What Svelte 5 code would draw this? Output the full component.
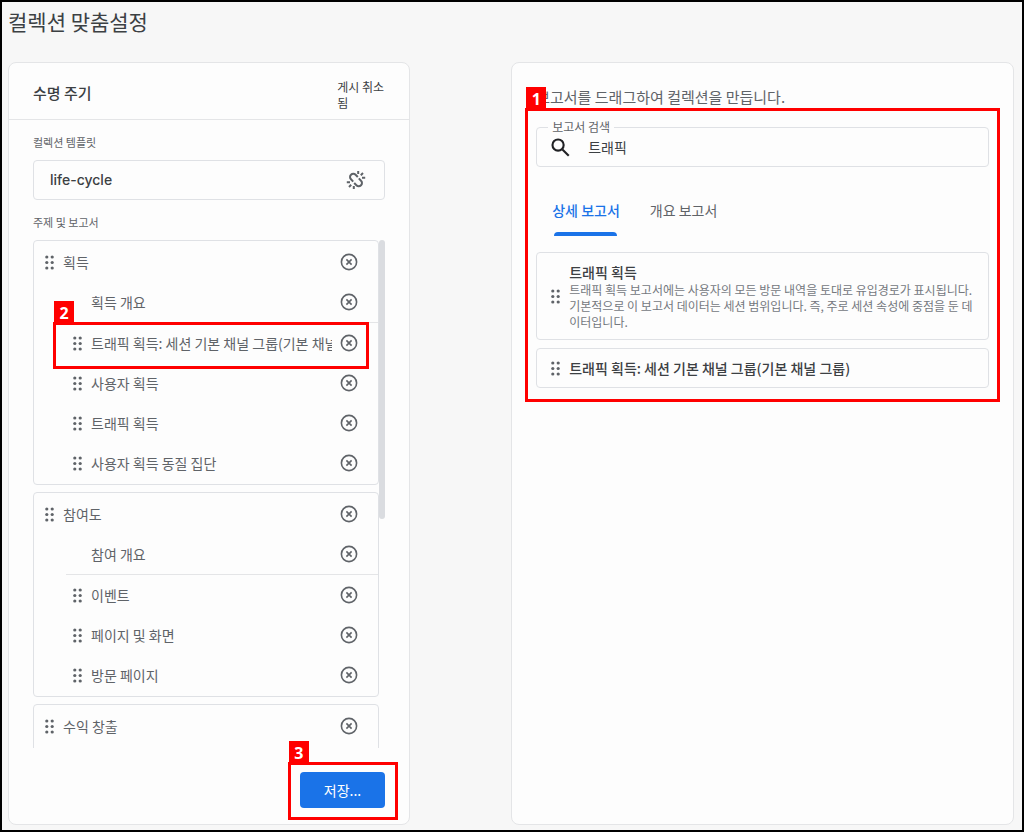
<script>
  let template = $state('life-cycle')
  let query    = $state('트래픽')
  let tab      = $state('detail')

  const TABS = [
    { value: 'detail',   label: '상세 보고서' },
    { value: 'overview', label: '개요 보고서' },
  ]

  let groups = $state([
    {
      name: '획득',
      overview: '획득 개요',
      reports: [
        { name: '트래픽 획득: 세션 기본 채널 그룹(기본 채널', step: 2 },
        { name: '사용자 획득' },
        { name: '트래픽 획득' },
        { name: '사용자 획득 동질 집단' },
      ],
    },
    {
      name: '참여도',
      overview: '참여 개요',
      reports: [
        { name: '이벤트' },
        { name: '페이지 및 화면' },
        { name: '방문 페이지' },
      ],
    },
    { name: '수익 창출', reports: [] },
  ])

  const RESULTS = [
    {
      name: '트래픽 획득',
      desc: '트래픽 획득 보고서에는 사용자의 모든 방문 내역을 토대로 유입경로가 표시됩니다. 기본적으로 이 보고서 데이터는 세션 범위입니다. 즉, 주로 세션 속성에 중점을 둔 데이터입니다.',
    },
    { name: '트래픽 획득: 세션 기본 채널 그룹(기본 채널 그룹)' },
  ]

  function removeReport(group, i) {
    group.reports.splice(i, 1)
  }
</script>

{#snippet handle()}
  <svg class="handle" viewBox="0 0 9 15" aria-hidden="true">
    {#each [2, 7.5, 13] as y}
      <circle cx="1.8" cy={y} r="1.6" />
      <circle cx="7.2" cy={y} r="1.6" />
    {/each}
  </svg>
{/snippet}

{#snippet removeButton(name, onclick)}
  <button type="button" class="remove" aria-label={name} {onclick}>
    <svg viewBox="0 0 18 18" aria-hidden="true">
      <circle cx="9" cy="9" r="7.6" />
      <path d="M6.4 6.4l5.2 5.2M11.6 6.4l-5.2 5.2" />
    </svg>
  </button>
{/snippet}

{#snippet marker(n)}
  <div class="marker marker-{n}"><span>{n}</span></div>
{/snippet}

<div class="page">
  <h1>컬렉션 맞춤설정</h1>

  <main>
    <section class="card">
      <header>
        <h2>수명 주기</h2>
        <p class="status">게시 취소됨</p>
      </header>

      <div class="body">
        <label class="lbl" for="template">컬렉션 템플릿</label>
        <div class="template">
          <input id="template" type="text" bind:value={template} readonly />
          <button type="button" class="unlink" aria-label="연결 해제">
            <svg viewBox="0 0 20 20" aria-hidden="true">
              <path d="M7.2 11.6L5 9.3a3.2 3.2 0 0 1 0-4.6a3.2 3.2 0 0 1 4.6 0l2.2 2.3" />
              <path d="M12.8 8.4l2.2 2.3a3.2 3.2 0 0 1 0 4.6a3.2 3.2 0 0 1-4.6 0L8.2 13" />
              <path d="M12.2 4V1M14.8 5.2l2.2-2.2M16 7.8h3.2M7.8 16v3M5.2 14.8L3 17M4 12.2H.8" />
            </svg>
          </button>
        </div>

        <p class="lbl">주제 및 보고서</p>
        <div class="scroller">
          <div class="groups">
            {#each groups as group}
              <ul class="group">
                <li class="row">
                  {@render handle()}
                  <span class="name">{group.name}</span>
                  {@render removeButton(group.name, () => groups.splice(groups.indexOf(group), 1))}
                </li>
                {#if group.overview}
                  <li class="row child overview">
                    <span class="name">{group.overview}</span>
                    {@render removeButton(group.overview, () => (group.overview = ''))}
                  </li>
                {/if}
                {#each group.reports as report, i}
                  <li class="row child">
                    {@render handle()}
                    <span class="name">{report.name}</span>
                    {@render removeButton(report.name, () => removeReport(group, i))}
                    {#if report.step}
                      {@render marker(report.step)}
                    {/if}
                  </li>
                {/each}
              </ul>
            {/each}
          </div>
          <div class="track"><div class="thumb"></div></div>
        </div>
      </div>

      <footer>
        <div class="save-wrap">
          <button type="button" class="save">저장...</button>
          {@render marker(3)}
        </div>
      </footer>
    </section>

    <section class="card library">
      <p class="hint">보고서를 드래그하여 컬렉션을 만듭니다.</p>

      <div class="finder">
        <div class="search">
          <label for="search">보고서 검색</label>
          <svg viewBox="0 0 18 18" aria-hidden="true">
            <circle cx="6.7" cy="6.7" r="5.3" />
            <path d="M10.8 10.8l6 6" />
          </svg>
          <input id="search" type="text" bind:value={query} />
        </div>

        <div class="tabs" role="tablist">
          {#each TABS as t}
            <button
              type="button"
              role="tab"
              class="tab"
              class:active={tab === t.value}
              aria-selected={tab === t.value}
              onclick={() => (tab = t.value)}
            >{t.label}</button>
          {/each}
        </div>

        <ul class="results">
          {#each RESULTS as r}
            <li>
              {@render handle()}
              <div>
                <h3>{r.name}</h3>
                {#if r.desc}
                  <p>{r.desc}</p>
                {/if}
              </div>
            </li>
          {/each}
        </ul>
        {@render marker(1)}
      </div>
    </section>
  </main>
</div>

<style>
  :global(body) { margin: 0; }

  .page, .page * { box-sizing: border-box; }

  .page {
    display: flex;
    flex-direction: column;
    height: 100vh;
    padding: 0 8px 5px 6px;
    border: 2px solid #000;
    background: #f7f7f7;
    color: #3c4043;
    font-family: 'Noto Sans CJK KR', sans-serif;
    font-size: 14px;
    line-height: 20px;
  }

  h1, h2, h3, p, ul { margin: 0; padding: 0; font-weight: 400; }
  ul { list-style: none; }
  button, input { font: inherit; color: inherit; background: none; border: 0; padding: 0; margin: 0; }
  button { cursor: pointer; }
  svg { display: block; flex: none; }

  h1 { padding: 3px 0 25px; font-size: 21px; line-height: 32px; }

  main {
    flex: 1;
    min-height: 0;
    display: grid;
    grid-template-columns: 4fr 5fr;
    grid-template-rows: minmax(0, 1fr);
    column-gap: 101px;
  }

  .card {
    display: flex;
    flex-direction: column;
    min-width: 0;
    background: #fdfdfd;
    border: 1px solid #e4e5e7;
    border-radius: 8px;
  }

  header {
    display: flex;
    justify-content: space-between;
    align-items: flex-start;
    padding: 16px 24px 8px;
    border-bottom: 1px solid #e4e5e7;
  }
  h2 { font-size: 15px; font-weight: 500; line-height: 28px; }
  .status { width: 48px; font-size: 12px; line-height: 16px; }

  .body {
    flex: 1;
    min-height: 0;
    display: flex;
    flex-direction: column;
    padding: 12px 24px 0;
  }

  .lbl { display: block; padding-bottom: 8px; font-size: 11px; color: #5f6368; }

  .template {
    display: flex;
    align-items: center;
    height: 40px;
    margin-bottom: 12px;
    padding: 0 18px 0 16px;
    border: 1px solid #dfe1e5;
    border-radius: 4px;
  }
  .template input {
    flex: 1;
    min-width: 0;
    font-family: Inter, sans-serif;
    font-weight: 500;
    outline: none;
  }
  .unlink svg { width: 20px; height: 20px; fill: none; stroke: #5f6368; stroke-width: 2; }

  .scroller { flex: 1; min-height: 0; display: flex; }
  .groups { flex: 1; min-width: 0; overflow: hidden; }
  .track { width: 6px; }
  .thumb { height: 55%; background: #dadce0; border-radius: 3px; }

  .group {
    min-height: 60px;
    margin-bottom: 7px;
    padding: 1px 0;
    border: 1px solid #dfe1e5;
    border-radius: 4px;
    color: #5f6368;
  }

  .row { display: flex; align-items: center; height: 40px; padding: 0 20px 0 11px; }
  .child { position: relative; margin-left: 32px; padding-left: 7px; }
  .overview { height: 41px; padding-left: 25px; border-bottom: 1px solid #e4e5e7; }
  .name { flex: 1; min-width: 0; margin-right: 8px; overflow: hidden; white-space: nowrap; }

  .handle { width: 9px; height: 15px; margin-right: 9px; fill: #5f6368; }
  .remove svg { width: 18px; height: 18px; fill: none; stroke: #5f6368; stroke-width: 1.6; }

  footer { display: flex; justify-content: flex-end; padding: 24px 24px 16px; }
  .save-wrap { position: relative; }
  .save {
    display: block;
    height: 36px;
    padding: 0 24px;
    border-radius: 4px;
    background: #1a73e8;
    color: #fff;
  }

  .library { padding: 22px 24px; }
  .hint { padding-bottom: 18px; font-size: 15px; line-height: 24px; color: #5f6368; }
  .finder { position: relative; }

  .search {
    position: relative;
    display: flex;
    align-items: center;
    gap: 18px;
    height: 40px;
    padding: 0 14px;
    border: 1px solid #dfe1e5;
    border-radius: 4px;
  }
  .search label {
    position: absolute;
    top: -9px;
    left: 11px;
    padding: 0 4px;
    background: #fdfdfd;
    color: #5f6368;
    font-size: 12px;
    line-height: 16px;
  }
  .search svg { width: 19px; height: 19px; fill: none; stroke: #202124; stroke-width: 2; }
  .search input { flex: 1; min-width: 0; outline: none; }

  .tabs { display: flex; gap: 30px; margin: 28px 16px 16px; }
  .tab { position: relative; padding: 5px 0 16px; color: #5f6368; }
  .tab.active { color: #1a73e8; font-weight: 500; }
  .tab.active::after {
    content: '';
    position: absolute;
    left: 2px;
    right: 3px;
    bottom: 0;
    height: 4px;
    border-radius: 4px 4px 0 0;
    background: #1a73e8;
  }

  .results { display: flex; flex-direction: column; gap: 8px; }
  .results li {
    display: flex;
    align-items: center;
    padding: 9px 14px;
    border: 1px solid #dfe1e5;
    border-radius: 4px;
  }
  .results h3 { font-size: 14px; font-weight: 500; }
  .results p { font-size: 12px; line-height: 16px; color: #74787d; }

  /* numbered step frames laid over the controls they point at */
  .marker { position: absolute; border: 3px solid #f00; pointer-events: none; }
  .marker span {
    position: absolute;
    left: -2px;
    bottom: 100%;
    width: 20px;
    height: 24px;
    background: #f00;
    color: #fff;
    font-family: 'Noto Sans', sans-serif;
    font-size: 16px;
    font-weight: 700;
    line-height: 24px;
    text-align: center;
  }
  .marker-1 { inset: -19px -11px -14px; }
  .marker-2 { inset: -1px 9px -6px -13px; }
  .marker-3 { inset: -10px -13px -12px -12px; }
</style>
